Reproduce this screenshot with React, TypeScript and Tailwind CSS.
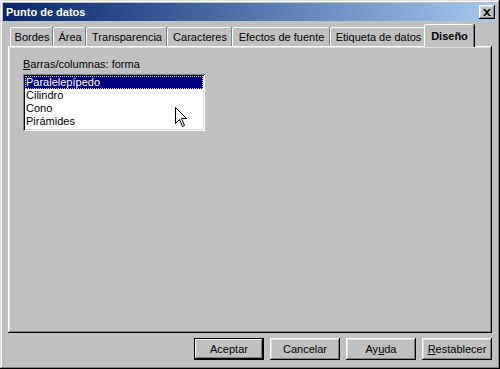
import React from "react";

const font = { fontFamily: '"Liberation Sans", Arial, sans-serif' };

function Tab({ label, w, active }: { label: string; w: number; active?: boolean }) {
  if (active) {
    return (
      <div
        className="relative z-10 -mx-[2px] h-[23px] self-start flex items-center justify-center bg-[#c0c0c0] border-t border-l border-white rounded-tl-[2px] rounded-tr-[2px] shadow-[inset_-1px_0_#808080,1px_0_#000] font-bold text-[11px] text-black"
        style={{ width: w + 4 }}
      >
        {label}
      </div>
    );
  }
  return (
    <div
      className="mt-[3px] h-[19px] flex items-center justify-center bg-[#c0c0c0] border-t border-l border-white rounded-tl-[2px] rounded-tr-[2px] shadow-[inset_-1px_0_#808080,1px_0_#000] text-[11px] text-black"
      style={{ width: w }}
    >
      {label}
    </div>
  );
}

function Btn({ children, def }: { children: React.ReactNode; def?: boolean }) {
  return (
    <div
      className={
        "w-[70px] h-[22px] flex items-center justify-center bg-[#c0c0c0] text-[11px] text-black " +
        (def
          ? "border border-black shadow-[inset_-1px_-1px_#000,inset_1px_1px_#fff,inset_-2px_-2px_#808080]"
          : "shadow-[inset_-1px_-1px_#000,inset_1px_1px_#fff,inset_-2px_-2px_#808080,inset_2px_2px_#dfdfdf]")
      }
    >
      {children}
    </div>
  );
}

export default function App() {
  return (
    <div
      style={font}
      className="w-[500px] h-[369px] bg-[#c0c0c0] p-[3px] flex flex-col shadow-[inset_-1px_-1px_#000,inset_1px_1px_#dfdfdf,inset_-2px_-2px_#808080,inset_2px_2px_#fff] overflow-hidden"
    >
      {/* Title bar */}
      <div className="h-[18px] flex items-center justify-between bg-gradient-to-r from-[#0a246a] to-[#a6caf0] pl-[3px] pr-[2px]">
        <span className="text-white font-bold text-[11px] leading-none">Punto de datos</span>
        <div className="w-[16px] h-[14px] bg-[#c0c0c0] flex items-center justify-center shadow-[inset_-1px_-1px_#000,inset_1px_1px_#fff,inset_-2px_-2px_#808080,inset_2px_2px_#dfdfdf]">
          <svg width="8" height="7" viewBox="0 0 8 7">
            <path d="M0 0h2l2 2 2-2h2L5 3.5 8 7H6L4 5 2 7H0l3-3.5z" fill="#000" />
          </svg>
        </div>
      </div>

      {/* Tabs */}
      <div className="mt-[3px] h-[22px] flex pl-[7px]">
        <Tab label="Bordes" w={43} />
        <Tab label="Área" w={33} />
        <Tab label="Transparencia" w={81} />
        <Tab label="Caracteres" w={65} />
        <Tab label="Efectos de fuente" w={98} />
        <Tab label="Etiqueta de datos" w={96} />
        <Tab label="Diseño" w={46} active />
      </div>

      {/* Panel */}
      <div className="mx-[5px] h-[287px] bg-[#c0c0c0] shadow-[inset_-1px_-1px_#000,inset_1px_1px_#fff,inset_-2px_-2px_#808080,inset_2px_2px_#dfdfdf] pt-[12px] pl-[15px] relative">
        <div className="text-[11px] text-black leading-[13px]">
          <span className="underline">B</span>arras/columnas: forma
        </div>
        <div className="mt-[3px] w-[182px] h-[57px] bg-white p-[2px] shadow-[inset_1px_1px_#808080,inset_-1px_-1px_#fff,inset_2px_2px_#000,inset_-2px_-2px_#dfdfdf]">
          <div className="h-[13px] bg-[#000080] text-white text-[11px] leading-[13px] pl-[1px] outline outline-1 outline-dotted outline-[#c0c0ff] -outline-offset-1">
            Paralelepípedo
          </div>
          <div className="h-[13px] text-black text-[11px] leading-[13px] pl-[1px]">Cilindro</div>
          <div className="h-[13px] text-black text-[11px] leading-[13px] pl-[1px]">Cono</div>
          <div className="h-[13px] text-black text-[11px] leading-[13px] pl-[1px]">Pirámides</div>
        </div>
        {/* mouse cursor */}
        <svg className="absolute left-[167px] top-[61px]" width="13" height="21" viewBox="0 0 13 21">
          <path
            d="M0.5 0.5 L0.5 16.5 L4.5 12.5 L7.5 19.5 L9.5 18.5 L6.5 11.5 L11.5 11.5 Z"
            fill="#fff"
            stroke="#000"
            strokeWidth="1"
            strokeLinejoin="miter"
          />
        </svg>
      </div>

      {/* Buttons */}
      <div className="mt-[5px] flex justify-end gap-[6px] pr-[5px]">
        <Btn def>Aceptar</Btn>
        <Btn>Cancelar</Btn>
        <Btn>
          Ay<span className="underline">u</span>da
        </Btn>
        <Btn>
          <span className="underline">R</span>establecer
        </Btn>
      </div>
    </div>
  );
}
